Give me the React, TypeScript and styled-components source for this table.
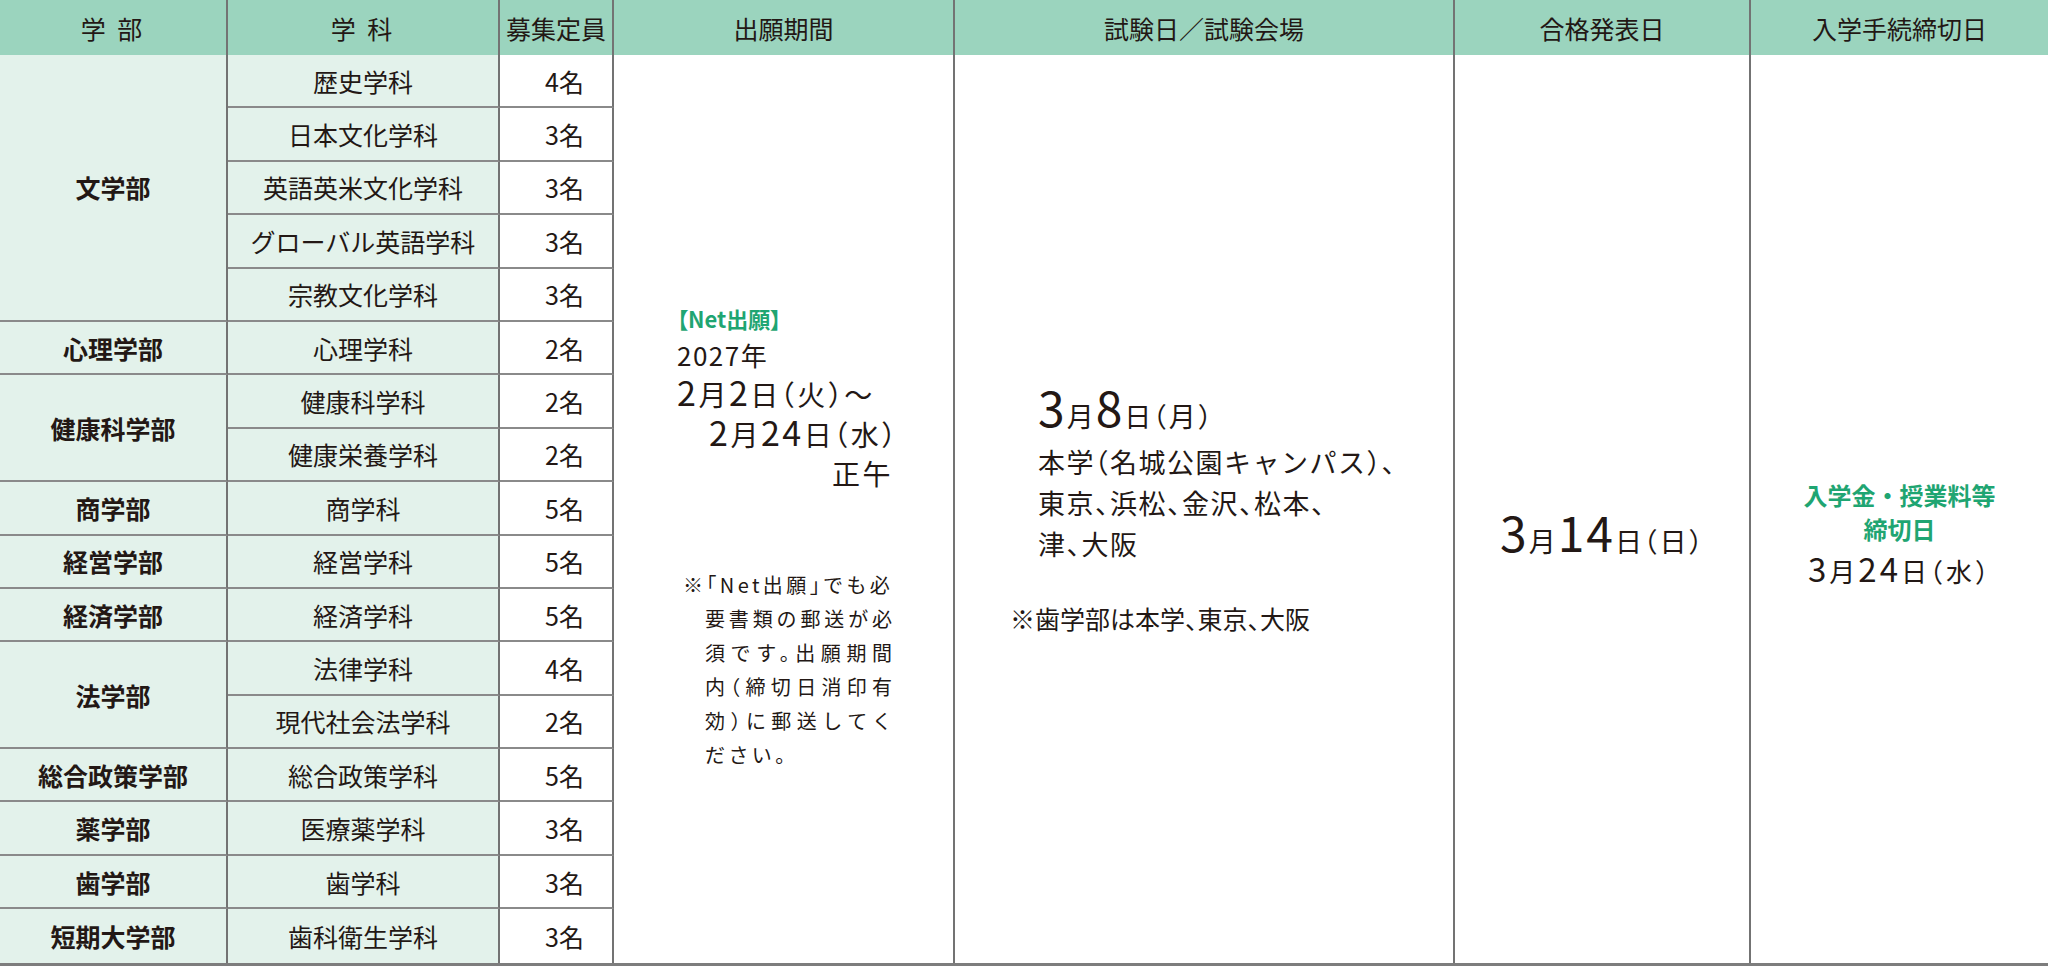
import React from 'react';
import styled, { createGlobalStyle } from 'styled-components';

const GlobalStyle = createGlobalStyle`
  html, body {
    margin: 0;
    padding: 0;
    background: #ffffff;
  }
  body {
    font-family: "Noto Sans CJK JP", "Noto Sans", sans-serif;
    color: #231815;
  }
`

const LINE = '#737373'
const ROW_LINE = '#8a8a8a'
const GREEN = '#1fa572'

const Table = styled.div`
  display: grid;
  grid-template-columns: 228px 272px 114px 341px 500px 296px 1fr;
  grid-template-rows: 55px repeat(17, 53.4px);
  width: 2048px;
  border-bottom: 3px solid #7d7d7d;
`

const HeadCell = styled.div<{ $last?: boolean; $spaced?: boolean }>`
  background: #9bd4be;
  display: flex;
  align-items: center;
  justify-content: center;
  font-size: 25px;
  white-space: pre;
  letter-spacing: ${p => (p.$spaced ? '3px' : '0')};
  border-right: ${p => (p.$last ? 'none' : `2px solid ${LINE}`)};
  box-sizing: border-box;
`

const BodyCell = styled.div<{ $col: number; $row: number; $span?: number; $last?: boolean }>`
  grid-column: ${p => p.$col};
  grid-row: ${p => `${p.$row} / span ${p.$span || 1}`};
  display: flex;
  align-items: center;
  justify-content: center;
  box-sizing: border-box;
  border-right: 2px solid ${LINE};
  border-bottom: ${p => (p.$last ? 'none' : `2px solid ${ROW_LINE}`)};
  font-size: 25px;
  white-space: nowrap;
`

const FacultyCell = styled(BodyCell)`
  background: #e3f2eb;
  font-weight: 700;
`

const DeptCell = styled(BodyCell)`
  background: #e3f2eb;
`

const QuotaCell = styled(BodyCell)`
  background: #ffffff;
  justify-content: flex-end;
  padding-right: 28px;
`

const MergedCell = styled.div<{ $col: number; $shift: number; $align?: string; $padLeft?: number; $last?: boolean }>`
  grid-column: ${p => p.$col};
  grid-row: 2 / span 17;
  display: flex;
  flex-direction: column;
  justify-content: center;
  align-items: ${p => p.$align || 'flex-start'};
  padding-top: ${p => p.$shift}px;
  padding-left: ${p => p.$padLeft || 0}px;
  box-sizing: border-box;
  border-right: ${p => (p.$last ? 'none' : `2px solid ${LINE}`)};
`

/* 出願期間 */
const PeriodBlock = styled.div`
  width: 216px;
  display: flex;
  flex-direction: column;
`

const NetLabel = styled.div`
  color: ${GREEN};
  font-weight: 700;
  font-size: 22px;
  line-height: 36px;
  font-feature-settings: "palt";
`

const YearLine = styled.div`
  font-size: 26px;
  line-height: 38px;
  letter-spacing: 1.5px;
`

const DateLine = styled.div<{ $indent?: number; $right?: boolean; $lh?: number }>`
  font-size: 28px;
  line-height: ${p => p.$lh || 40}px;
  letter-spacing: 2.5px;
  padding-left: ${p => p.$indent || 0}px;
  text-align: ${p => (p.$right ? 'right' : 'left')};
  font-feature-settings: "halt";
  white-space: nowrap;
`

const Num = styled.span<{ $size: number }>`
  font-size: ${p => p.$size}px;
  line-height: 1;
`

const Note = styled.div`
  margin-top: 76px;
  padding-left: 28px;
  font-size: 20px;
  line-height: 34px;
  font-feature-settings: "halt";
`

const NoteLine = styled.div<{ $hang?: boolean; $end?: boolean }>`
  width: ${p => (p.$hang ? 212 : 187)}px;
  margin-left: ${p => (p.$hang ? -22 : 0)}px;
  text-align: justify;
  text-align-last: ${p => (p.$end || p.$hang ? 'left' : 'justify')};
  letter-spacing: ${p => (p.$end || p.$hang ? '3.4px' : '0')};
  white-space: nowrap;
`

/* 試験日／試験会場 */
const ExamBlock = styled.div`
  display: flex;
  flex-direction: column;
`

const BigDate = styled.div<{ $indent?: number }>`
  font-size: 27px;
  line-height: 50px;
  letter-spacing: 2px;
  padding-left: ${p => p.$indent || 0}px;
  font-feature-settings: "halt";
  white-space: nowrap;
`

const Venue = styled.div`
  padding-left: 83px;
  font-size: 27px;
  line-height: 41px;
  letter-spacing: 1.5px;
  font-feature-settings: "halt";
`

const VenueNote = styled.div`
  margin-top: 36px;
  padding-left: 55px;
  font-size: 25px;
  line-height: 36px;
  font-feature-settings: "halt";
`

/* 入学手続締切日 */
const GreenLine = styled.div`
  color: ${GREEN};
  font-weight: 700;
  font-size: 24px;
  line-height: 34px;
  text-align: center;
`

const DeadlineDate = styled.div`
  font-size: 26px;
  line-height: 50px;
  letter-spacing: 3px;
  font-feature-settings: "halt";
  text-align: center;
`

const faculties: { name: string; depts: [string, number][] }[] = [
  { name: '文学部', depts: [['歴史学科', 4], ['日本文化学科', 3], ['英語英米文化学科', 3], ['グローバル英語学科', 3], ['宗教文化学科', 3]] },
  { name: '心理学部', depts: [['心理学科', 2]] },
  { name: '健康科学部', depts: [['健康科学科', 2], ['健康栄養学科', 2]] },
  { name: '商学部', depts: [['商学科', 5]] },
  { name: '経営学部', depts: [['経営学科', 5]] },
  { name: '経済学部', depts: [['経済学科', 5]] },
  { name: '法学部', depts: [['法律学科', 4], ['現代社会法学科', 2]] },
  { name: '総合政策学部', depts: [['総合政策学科', 5]] },
  { name: '薬学部', depts: [['医療薬学科', 3]] },
  { name: '歯学部', depts: [['歯学科', 3]] },
  { name: '短期大学部', depts: [['歯科衛生学科', 3]] },
]

const TOTAL_ROWS = 17

const App: React.FC = () => {
  let row = 2
  const leftCells: React.ReactNode[] = []

  faculties.forEach((fac) => {
    const start = row
    const span = fac.depts.length
    const lastFac = start + span - 1 === TOTAL_ROWS + 1
    leftCells.push(
      <FacultyCell key={fac.name} $col={1} $row={start} $span={span} $last={lastFac}>
        {fac.name}
      </FacultyCell>
    )
    fac.depts.forEach(([dept, quota]) => {
      const last = row === TOTAL_ROWS + 1
      leftCells.push(
        <DeptCell key={dept} $col={2} $row={row} $last={last}>{dept}</DeptCell>,
        <QuotaCell key={dept + '-q'} $col={3} $row={row} $last={last}>{quota}名</QuotaCell>
      )
      row++
    })
  })

  return (
    <>
      <GlobalStyle />
      <Table>
        <HeadCell $spaced>学 部</HeadCell>
        <HeadCell $spaced>学 科</HeadCell>
        <HeadCell>募集定員</HeadCell>
        <HeadCell>出願期間</HeadCell>
        <HeadCell>試験日／試験会場</HeadCell>
        <HeadCell>合格発表日</HeadCell>
        <HeadCell $last>入学手続締切日</HeadCell>

        {leftCells}

        <MergedCell $col={4} $shift={54} $padLeft={63}>
          <PeriodBlock>
            <NetLabel>【Net出願】</NetLabel>
            <YearLine>2027年</YearLine>
            <DateLine><Num $size={34}>2</Num>月<Num $size={34}>2</Num>日（火）～</DateLine>
            <DateLine $indent={32}><Num $size={34}>2</Num>月<Num $size={34}>24</Num>日（水）</DateLine>
            <DateLine $right $lh={38}>正午</DateLine>
            <Note>
              <NoteLine $hang>※「Net出願」でも必</NoteLine>
              <NoteLine>要書類の郵送が必</NoteLine>
              <NoteLine>須です。出願期間</NoteLine>
              <NoteLine>内（締切日消印有</NoteLine>
              <NoteLine>効）に郵送してく</NoteLine>
              <NoteLine $end>ださい。</NoteLine>
            </Note>
          </PeriodBlock>
        </MergedCell>

        <MergedCell $col={5} $shift={0}>
          <ExamBlock>
            <BigDate $indent={83}><Num $size={48}>3</Num>月<Num $size={48}>8</Num>日（月）</BigDate>
            <Venue>
              本学（名城公園キャンパス）、<br />
              東京、浜松、金沢、松本、<br />
              津、大阪
            </Venue>
            <VenueNote>※歯学部は本学、東京、大阪</VenueNote>
          </ExamBlock>
        </MergedCell>

        <MergedCell $col={6} $shift={56} $align="center">
          <BigDate><Num $size={48}>3</Num>月<Num $size={48}>14</Num>日（日）</BigDate>
        </MergedCell>

        <MergedCell $col={7} $shift={56} $align="center" $last>
          <GreenLine>入学金・授業料等</GreenLine>
          <GreenLine>締切日</GreenLine>
          <DeadlineDate><Num $size={33}>3</Num>月<Num $size={33}>24</Num>日（水）</DeadlineDate>
        </MergedCell>
      </Table>
    </>
  );
}

export default App;
